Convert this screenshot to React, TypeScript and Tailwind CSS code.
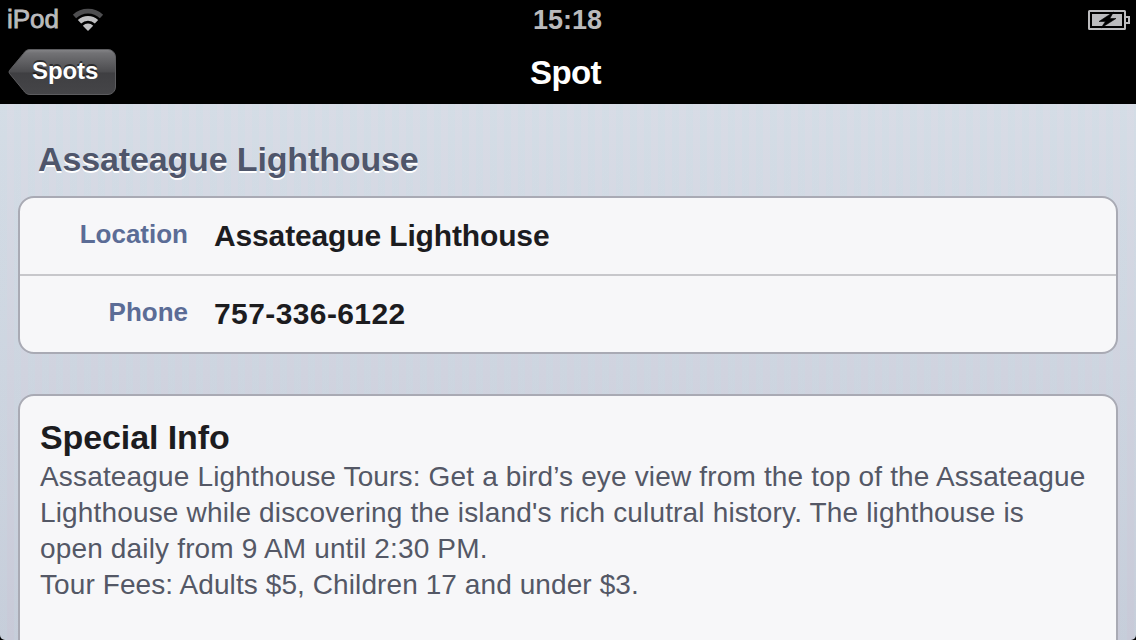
import React from "react";

interface DetailRow {
  label: string;
  value: string;
  tracking: string;
}

const rows: DetailRow[] = [
  { label: "Location", value: "Assateague Lighthouse", tracking: "tracking-[-0.14px]" },
  { label: "Phone", value: "757-336-6122", tracking: "tracking-[0.4px]" },
];

const infoLines = [
  "Assateague Lighthouse Tours: Get a bird’s eye view from the top of the Assateague",
  "Lighthouse while discovering the island's rich culutral history. The lighthouse is",
  "open daily from 9 AM until 2:30 PM.",
  "Tour Fees: Adults $5, Children 17 and under $3.",
];

function WifiIcon() {
  return (
    <svg width="32" height="24" viewBox="0 0 32 24" fill="none">
      <path d="M2.5 8.5a19.8 19.8 0 0 1 27 0" stroke="#4e4e50" strokeWidth="4.8" />
      <path d="M7.5 13.7a12.3 12.3 0 0 1 17 0" stroke="#c0c0c2" strokeWidth="4.8" />
      <path d="M10.8 17.8a7.2 7.2 0 0 1 10.400 0L16 23z" fill="#c0c0c2" />
    </svg>
  );
}

function BatteryIcon() {
  return (
    <svg width="42" height="20" viewBox="0 0 42 20" fill="none">
      <rect x="1" y="1" width="36" height="18" rx="0.5" stroke="#bcbcbe" strokeWidth="2" />
      <rect x="4" y="4" width="30" height="12" fill="#bcbcbe" />
      <path d="M38 7h3v6h-3" stroke="#bcbcbe" strokeWidth="2" />
      <path d="M25.5 2 11 11.500H17.500L13 18 28 8.500H21.800z" fill="#000" stroke="#000" strokeWidth="0.6" />
    </svg>
  );
}

function StatusBar() {
  return (
    <div className="grid h-10 grid-cols-3 items-center pr-[6px] pl-[7px] text-[#bababc]">
      <div className="flex items-center gap-[13px]">
        <span className="pb-0.5 text-[26px] leading-[38px] [-webkit-text-stroke:0.8px_#bababc]">iPod</span>
        <WifiIcon />
      </div>
      <span className="pr-0.5 text-center text-[27px] leading-10 font-bold">15:18</span>
      <div className="flex justify-end">
        <BatteryIcon />
      </div>
    </div>
  );
}

function BackButton() {
  return (
    <button type="button" className="relative h-12 w-[109px] text-left">
      {/* arrow shaped plate */}
      <svg className="absolute inset-0" width="109" height="48" viewBox="0 0 109 48">
        <defs>
          <linearGradient id="plate" x1="0" y1="0" x2="0" y2="1">
            <stop offset="0" stopColor="#858588" />
            <stop offset="0.08" stopColor="#727275" />
            <stop offset="0.5" stopColor="#4b4b4e" />
            <stop offset="0.52" stopColor="#3f3f42" />
            <stop offset="1" stopColor="#454548" />
          </linearGradient>
        </defs>
        <path
          d="M22 1.5h78a7.5 7.5 0 0 1 7.5 7.5v30a7.5 7.5 0 0 1-7.5 7.5H22c-3 0-5-1.6-6.5-4L1.5 25.5q-1-1.5 0-3L15.500 5.500c1.500-2.400 3.500-4 6.500-4z"
          fill="url(#plate)"
          stroke="#5c5c5f"
          strokeWidth="1"
        />
      </svg>
      <span className="relative block pb-0.5 pl-6 text-2xl leading-[44px] font-bold tracking-[-0.1px] text-white [text-shadow:0_-2px_0_rgba(0,0,0,0.5)]">
        Spots
      </span>
    </button>
  );
}

function NavBar() {
  return (
    <div className="grid h-16 grid-cols-[1fr_auto_1fr] items-center px-2">
      <BackButton />
      <h1 className="pt-px pr-[5px] text-[33px] leading-[63px] font-bold tracking-[-0.6px] text-white">Spot</h1>
      <span />
    </div>
  );
}

export default function App() {
  return (
    <div className="flex h-[640px] w-[1136px] flex-col overflow-hidden bg-black font-['Liberation_Sans',Arial,sans-serif]">
      <StatusBar />
      <NavBar />

      <main className="min-h-0 flex-1 overflow-hidden rounded-b-[5px] bg-[repeating-linear-gradient(90deg,rgba(190,225,230,0.16)_0_7px,transparent_7px_14px),linear-gradient(#d8dce6,#c8cad8)] px-[18px] pt-[35px]">
        <h2 className="pl-5 text-[34px] leading-10 font-bold tracking-[-0.14px] whitespace-nowrap text-[#4f566b] [text-shadow:0_2px_0_#fff]">
          Assateague Lighthouse
        </h2>

        <section className="mt-[17px] h-[158px] rounded-2xl border-2 border-[#a9aab4] bg-[#f7f7f9]">
          {rows.map((row) => (
            <div key={row.label} className="flex h-[78px] items-center border-b-2 border-[#c7c7cb] last:h-[76px] last:border-b-0">
              <span className="w-[168px] pb-1 text-right text-[26px] leading-8 font-bold text-[#5b6c96]">{row.label}</span>
              <span className={`pl-[26px] text-[30px] leading-9 font-bold whitespace-nowrap text-[#1c1c1f] ${row.tracking}`}>
                {row.value}
              </span>
            </div>
          ))}
        </section>

        <section className="mt-10 h-[280px] rounded-t-2xl border-2 border-[#a9aab4] bg-[#f7f7f9] px-5 pt-[21px]">
          <h3 className="text-[34px] leading-10 font-bold tracking-[-0.1px] text-[#1c1c1f]">Special Info</h3>
          <div className="pt-0.5 text-[28px] leading-9 tracking-[0.16px] whitespace-nowrap text-[#545866]">
            {infoLines.map((line) => (
              <p key={line} className="last:tracking-[0.09px]">
                {line}
              </p>
            ))}
          </div>
        </section>
      </main>
    </div>
  );
}
